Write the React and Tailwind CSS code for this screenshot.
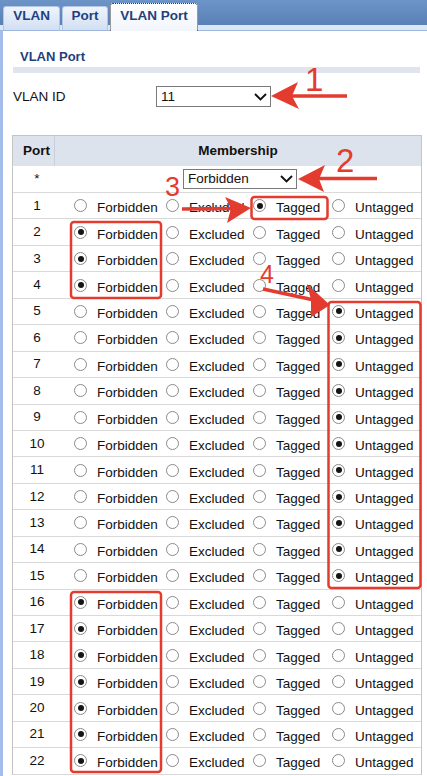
import React from "react";

function Radio({ checked }) {
  return (
    <span className="w-[13px] h-[13px] rounded-full border border-[#8a8a8a] bg-white flex items-center justify-center shrink-0">
      {checked && <span className="w-[6px] h-[6px] rounded-full bg-[#151515]" />}
    </span>
  );
}

function Opt({ w, checked, label }) {
  return (
    <div className={`flex items-center ${w}`}>
      <Radio checked={checked} />
      <span className="ml-[10px] mt-[5px] leading-[16px]">{label}</span>
    </div>
  );
}

function Chevron() {
  return (
    <svg width="13" height="8" viewBox="0 0 13 8" className="shrink-0">
      <polyline points="1,1 6.5,6.5 12,1" fill="none" stroke="#111" strokeWidth="1.9" />
    </svg>
  );
}

function Select({ value, w, h }) {
  return (
    <div className={`${w} ${h} border border-[#7a7a7a] bg-white flex items-center justify-between pl-[4px] pr-[3px]`}>
      <span className="leading-[16px]">{value}</span>
      <Chevron />
    </div>
  );
}

const rows = [];
for (let i = 1; i <= 22; i++) {
  let sel = "Untagged";
  if (i === 1) sel = "Tagged";
  else if (i >= 2 && i <= 4) sel = "Forbidden";
  else if (i >= 5 && i <= 15) sel = "Untagged";
  else sel = "Forbidden";
  rows.push({ n: i, sel });
}

function Annotations() {
  const red = "#e43b2f";
  return (
    <svg className="absolute inset-0 pointer-events-none" width="427" height="776" viewBox="0 0 427 776">
      {/* boxes */}
      <rect x="71" y="222" width="90" height="76" rx="3" fill="none" stroke={red} strokeWidth="2.5" />
      <rect x="251.5" y="197" width="76" height="22" rx="3" fill="none" stroke={red} strokeWidth="2.5" />
      <rect x="328.5" y="302" width="92" height="286" rx="3" fill="none" stroke={red} strokeWidth="2.5" />
      <rect x="71" y="592" width="90" height="180" rx="3" fill="none" stroke={red} strokeWidth="2.5" />
      {/* arrow 1 */}
      <line x1="290" y1="96" x2="347" y2="96" stroke={red} strokeWidth="3.5" />
      <polygon points="271,96 298,82 292,96 299,109" fill={red} />
      <text x="305" y="91" fontSize="33" fill={red} fontFamily="'Liberation Sans', Arial, sans-serif">1</text>
      {/* arrow 2 */}
      <line x1="318" y1="178.5" x2="377" y2="178.5" stroke={red} strokeWidth="3.5" />
      <polygon points="298,179 325,165 319,179 324,192" fill={red} />
      <text x="336" y="172" fontSize="33" fill={red} fontFamily="'Liberation Sans', Arial, sans-serif">2</text>
      {/* arrow 3 */}
      <line x1="182" y1="209" x2="234" y2="208.5" stroke={red} strokeWidth="3.5" />
      <polygon points="251,208 225,197 231,208.5 227,223" fill={red} />
      <text x="165" y="196" fontSize="27" fill={red} fontFamily="'Liberation Sans', Arial, sans-serif">3</text>
      {/* arrow 4 */}
      <line x1="263" y1="289" x2="314" y2="300" stroke={red} strokeWidth="3.5" />
      <polygon points="330,305 307,284 311,300 311,317" fill={red} />
      <text x="260" y="283" fontSize="25" fill={red} fontFamily="'Liberation Sans', Arial, sans-serif">4</text>
    </svg>
  );
}

export default function App() {
  return (
    <div className="relative w-[427px] h-[776px] overflow-hidden bg-white text-[13.5px] text-[#111] font-['Liberation_Sans',Arial,sans-serif]">
      {/* header with tabs */}
      <div className="h-[31px] flex items-end pl-[3px] gap-[2px] bg-[linear-gradient(to_bottom,#6c94c7_0px,#5981b7_25px,#dbe7f7_25px,#dbe7f7_30px,#9db7df_30px,#9db7df_31px)]">
        <div className="w-[57px] h-[24px] mb-[1px] rounded-t-[3px] border border-b-0 border-[#b3c6e4] bg-[linear-gradient(to_bottom,#eef4fc,#d2dff2)] flex justify-center pt-[1px] text-[13.5px] font-bold text-[#1f3f7f] leading-[16px]">
          VLAN
        </div>
        <div className="w-[46px] h-[24px] mb-[1px] rounded-t-[3px] border border-b-0 border-[#b3c6e4] bg-[linear-gradient(to_bottom,#eef4fc,#d2dff2)] flex justify-center pt-[1px] text-[13.5px] font-bold text-[#1f3f7f] leading-[16px]">
          Port
        </div>
        <div className="w-[88px] h-[28px] rounded-t-[3px] border border-b-0 border-dotted border-[#3a3a3a] bg-[linear-gradient(to_bottom,#ffffff,#f1f5fb)] flex justify-center pt-[4px] text-[13.5px] font-bold text-[#1f3f7f] leading-[16px]">
          VLAN Port
        </div>
      </div>

      {/* content */}
      <div className="border-l-[3px] border-[#a5bdea] h-[745px] pl-[9px] pr-[5px]">
        <div className="pt-[18px] pl-[8px] leading-[16px] text-[13px] font-bold text-[#1f3f7f]">VLAN Port</div>
        <div className="mt-[2px] ml-[1px] mr-[2px] h-[6px] bg-[#e0e4ec]" />

        <div className="mt-[13px] h-[21px] flex items-center">
          <div className="w-[144px] pl-[1px] leading-[16px]">VLAN ID</div>
          <Select value="11" w="w-[115px]" h="h-[21px]" />
        </div>

        {/* table */}
        <div className="mt-[28px] border border-b-0 border-[#c4c4c4]">
          <div className="h-[30px] flex bg-[#dde3ec] font-bold">
            <div className="w-[42px] border-r border-[#c9d0dc] flex items-center justify-center pl-[6px]">Port</div>
            <div className="flex-1 flex items-center justify-center">Membership</div>
          </div>
          <div className="h-[27px] flex items-center border-b border-[#d9d9d9]">
            <div className="w-[42px] pl-[6px] text-center">*</div>
            <div className="pl-[128px]">
              <Select value="Forbidden" w="w-[114px]" h="h-[20px]" />
            </div>
          </div>
          {rows.map((r) => (
            <div key={r.n} className="h-[26.45px] flex items-center border-b border-[#d9d9d9]">
              <div className="w-[42px] pl-[6px] text-center leading-[16px]">{r.n}</div>
              <div className="flex items-center pl-[19px]">
                <Opt w="w-[92px]" checked={r.sel === "Forbidden"} label="Forbidden" />
                <Opt w="w-[87px]" checked={r.sel === "Excluded"} label="Excluded" />
                <Opt w="w-[79px]" checked={r.sel === "Tagged"} label="Tagged" />
                <Opt w="w-[80px]" checked={r.sel === "Untagged"} label="Untagged" />
              </div>
            </div>
          ))}
        </div>
      </div>

      <Annotations />
    </div>
  );
}
